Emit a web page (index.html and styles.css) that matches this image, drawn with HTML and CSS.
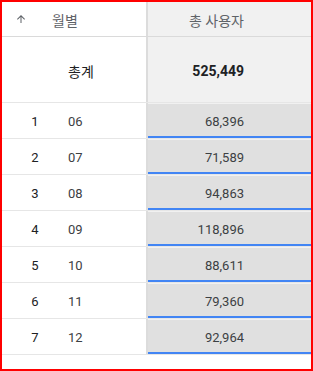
FILE: index.html
```html
<!DOCTYPE html>
<html lang="ko">
<head>
<meta charset="utf-8">
<link rel="stylesheet" href="styles.css">
</head>
<body>
<div class="frame">
  <div class="table">
    <div class="row head">
      <div class="left">
        <svg class="sort" viewBox="0 0 24 24" width="12" height="12"><path d="M4 12l1.41 1.41L11 7.83V20h2V7.83l5.58 5.59L20 12l-8-8-8 8z" fill="#5f6368"/></svg>
        <span class="head-label">월별</span>
      </div>
      <div class="right"><span class="head-metric">총 사용자</span></div>
    </div>
    <div class="row total">
      <div class="left"><span class="rank"></span><span class="month total-label">총계</span></div>
      <div class="right"><span class="total-val">525,449</span></div>
    </div>
    <div class="row data">
      <div class="left"><span class="rank">1</span><span class="month">06</span></div>
      <div class="right"><div class="bar"><span>68,396</span></div></div>
    </div>
    <div class="row data">
      <div class="left"><span class="rank">2</span><span class="month">07</span></div>
      <div class="right"><div class="bar"><span>71,589</span></div></div>
    </div>
    <div class="row data">
      <div class="left"><span class="rank">3</span><span class="month">08</span></div>
      <div class="right"><div class="bar"><span>94,863</span></div></div>
    </div>
    <div class="row data">
      <div class="left"><span class="rank">4</span><span class="month">09</span></div>
      <div class="right"><div class="bar"><span>118,896</span></div></div>
    </div>
    <div class="row data">
      <div class="left"><span class="rank">5</span><span class="month">10</span></div>
      <div class="right"><div class="bar"><span>88,611</span></div></div>
    </div>
    <div class="row data">
      <div class="left"><span class="rank">6</span><span class="month">11</span></div>
      <div class="right"><div class="bar"><span>79,360</span></div></div>
    </div>
    <div class="row data">
      <div class="left"><span class="rank">7</span><span class="month">12</span></div>
      <div class="right"><div class="bar"><span>92,964</span></div></div>
    </div>
  </div>
</div>
</body>
</html>
```
FILE: styles.css
```css
html, body {
  margin: 0;
  padding: 0;
  background: #fff;
}
.frame {
  width: 313px;
  height: 371px;
  box-sizing: border-box;
  border: 2px solid #ff0000;
  font-family: Roboto, "Noto Sans CJK KR", sans-serif;
  overflow: hidden;
}
.table {
  display: flex;
  flex-direction: column;
}
.row {
  display: flex;
  border-bottom: 1px solid #e6e6e6;
}
.left {
  width: 144px;
  display: flex;
  align-items: center;
}
.right {
  flex: 1;
  border-left: 2px solid #dcdcdc;
  background: #f1f1f1;
  display: flex;
  align-items: center;
  justify-content: flex-end;
  padding-right: 67px;
}
.head {
  height: 34px;
  border-bottom-color: #dadada;
}
.head .left,
.head .right {
  padding-top: 2px;
  box-sizing: border-box;
}
.sort {
  margin-left: 13px;
  margin-bottom: 2px;
}
.head-label {
  margin-left: 25px;
  font-size: 14px;
  color: #5f6368;
}
.head-metric {
  font-size: 14px;
  color: #5f6368;
}
.total {
  height: 65px;
}
.total .left,
.total .right {
  padding-top: 2px;
  box-sizing: border-box;
}
.total-val {
  font-size: 14px;
  font-weight: 700;
  color: #202124;
}
.rank {
  width: 26px;
  margin-left: 20px;
  text-align: center;
  font-size: 13px;
  color: #202124;
}
.month {
  margin-left: 20px;
  font-size: 13px;
  color: #3c4043;
}
.total-label {
  font-size: 14px;
  color: #202124;
}
.data {
  height: 35px;
}
.data .left {
  padding-top: 2px;
  box-sizing: border-box;
}
.data .right {
  padding-right: 0;
  align-items: flex-start;
  padding-top: 1px;
}
.bar {
  flex: 1;
  box-sizing: border-box;
  height: 34px;
  background: #e0e0e0;
  border-bottom: 2px solid #4285f4;
  display: flex;
  align-items: center;
  justify-content: flex-end;
  padding-right: 67px;
  padding-top: 2px;
  font-size: 13px;
  color: #3c4043;
}
```
